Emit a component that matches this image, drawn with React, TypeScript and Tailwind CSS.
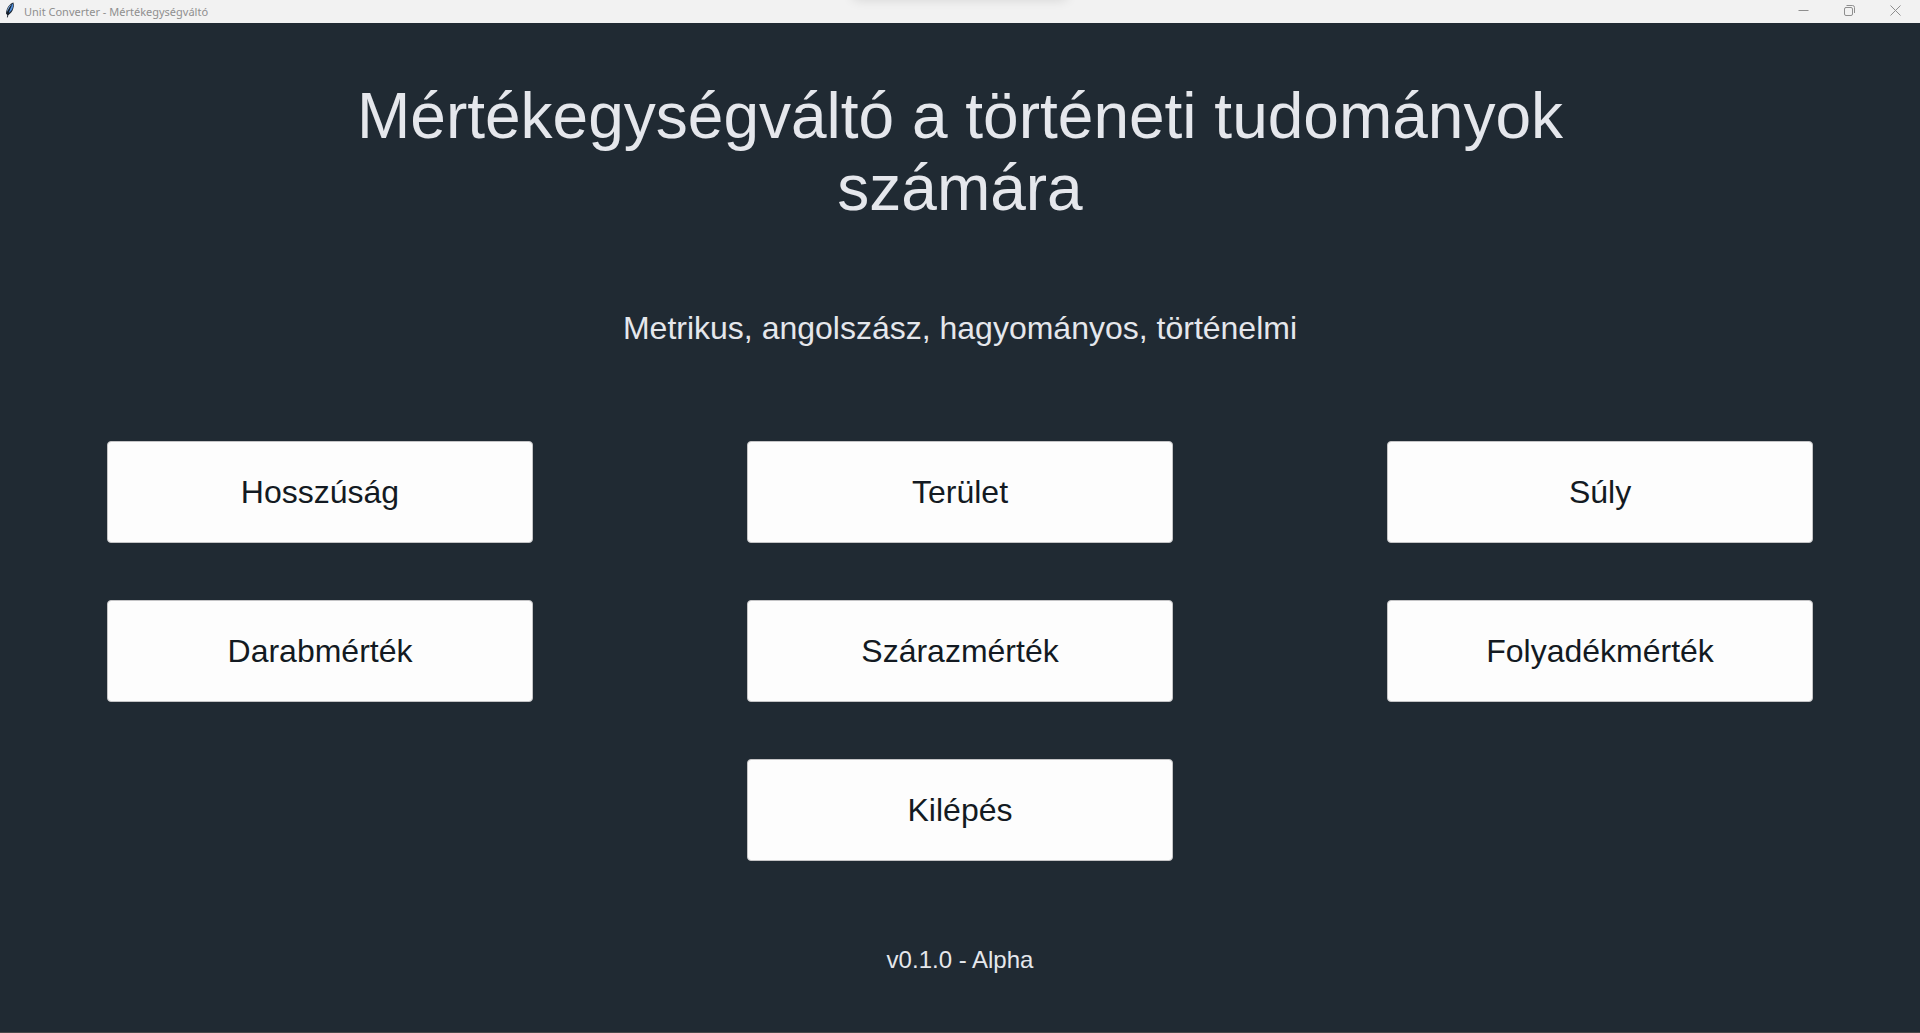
const unitRows = ["Hosszúság", "Terület", "Súly", "Darabmérték", "Szárazmérték", "Folyadékmérték"];

function FeatherIcon() {
  return (
    <svg width="16" height="16" viewBox="0 0 16 16" className="mb-1" aria-hidden="true">
      <path d="M11.4 0.4 C8 1.4 4.2 5.6 4 11.4 L5.6 13.4 C9.6 11.4 13 5.6 11.4 0.4 Z" fill="#16202c" />
      <path d="M10.8 1.4 C9 3.6 7.6 7 6.6 11 C9.6 9 12 5 10.8 1.4 Z" fill="#4f8fdc" />
      <path d="M9.6 2 C7 3.6 5 7 4.9 10 C6.2 7.4 7.8 4.6 9.6 2 Z" fill="#8fbcf0" />
      <path d="M9.4 3.6 C7.4 7 6 10.4 5.4 15.4" fill="none" stroke="#16202c" strokeWidth="0.9" />
    </svg>
  );
}

function WindowButton({ label, d }: { label: string; d: string }) {
  return (
    <button type="button" aria-label={label} className="flex w-[46px] items-center justify-center text-[#8f8f8f]">
      <svg width="11" height="11" viewBox="0 0 11 11" fill="none" stroke="currentColor" aria-hidden="true">
        <path d={d} />
      </svg>
    </button>
  );
}

function UnitButton({ label, className = "" }: { label: string; className?: string }) {
  return (
    <button
      type="button"
      className={
        "mx-auto w-2/3 rounded border border-[#c4c4c6] bg-[#fdfdfd] py-8 text-[32px] leading-9 text-[#131a22] " + className
      }
    >
      {label}
    </button>
  );
}

export default function App() {
  return (
    <div className="flex min-h-screen flex-col border-b border-[#48484a] bg-[#202a33] font-['Liberation_Sans',Arial,sans-serif] text-[#e5e7ec]">
      <header className="relative flex h-[23px] justify-between overflow-hidden bg-[#f2f2f2] pr-0.5">
        <div className="flex items-center gap-1.5 pl-0.5 font-['Noto_Sans',sans-serif] text-[11px] leading-4 text-[#8f8f8f]">
          <FeatherIcon />
          <span>Unit Converter - Mértékegységváltó</span>
        </div>
        <div className="absolute -top-3 left-1/2 h-3 w-[216px] -translate-x-1/2 rounded-lg shadow-[0_0_12px_rgba(0,0,0,0.12)]" />
        <div className="flex pb-0.5">
          <WindowButton label="Minimize" d="M0.5 5.5H10.5" />
          <WindowButton
            label="Restore"
            d="M1.5 2.5H7Q8.5 2.5 8.5 4V9Q8.5 10.5 7 10.5H2Q0.5 10.5 0.5 9V4Q0.5 2.5 2 2.5M2.5 0.5H8.5Q10.5 0.5 10.5 2.5V8"
          />
          <WindowButton label="Close" d="M0.5 0.5L10.5 10.5M10.5 0.5L0.5 10.5" />
        </div>
      </header>
      <main className="flex flex-1 flex-col pt-[57px] text-center">
        <h1 className="mx-auto max-w-[1280px] text-[64px] leading-[72px]">
          Mértékegységváltó a történeti tudományok számára
        </h1>
        <p className="mt-[86px] text-[32px] leading-9">Metrikus, angolszász, hagyományos, történelmi</p>
        <div className="mt-[95px] grid grid-cols-3 gap-y-[57px]">
          {unitRows.map((label) => (
            <UnitButton key={label} label={label} />
          ))}
          <UnitButton label="Kilépés" className="col-start-2" />
        </div>
        <p className="mt-[85px] text-[24px] leading-7">v0.1.0 - Alpha</p>
      </main>
    </div>
  );
}
